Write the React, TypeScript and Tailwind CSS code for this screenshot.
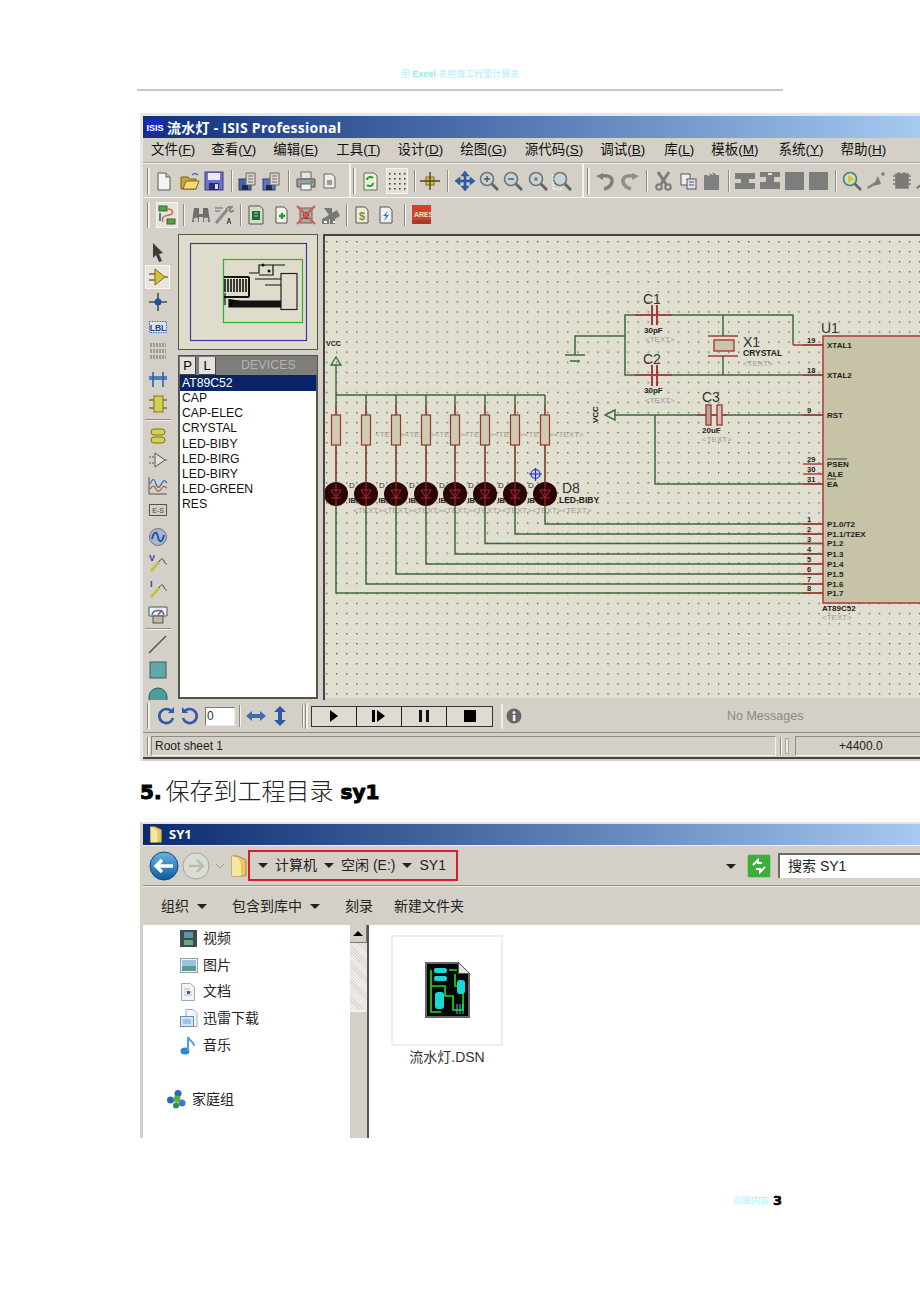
import type { ReactNode } from "react";

const CJK = "font-['Liberation_Sans','Noto_Sans_CJK_SC',sans-serif]";

type IconProps = { className?: string };

function Ic({ children, className }: { children: ReactNode; className?: string }) {
  return (
    <svg width="20" height="20" viewBox="0 0 20 20" className={`shrink-0 ${className ?? ""}`}>
      {children}
    </svg>
  );
}

function Grip({ className }: IconProps) {
  return <div className={`h-[26px] w-[3px] shrink-0 border-l border-[#8f8c84] bg-[#f2f0ea] ${className ?? ""}`} />;
}

function Sep({ className }: IconProps) {
  return <div className={`h-[22px] w-[2px] shrink-0 border-l border-[#8f8c84] bg-[#f4f2ec] ${className ?? ""}`} />;
}

function Divider({ className }: IconProps) {
  return <div className={`h-[33px] w-[2px] shrink-0 bg-[#f4f2ec] ${className ?? ""}`} />;
}

/* main toolbar */
const NewDoc = ({ className }: IconProps) => (
  <Ic className={className}>
    <path d="M4 2h8l4 4v13H4z" fill="#f4f4f4" stroke="#5a5a5a" />
    <path d="M12 2v4h4" fill="#cfcfcf" stroke="#5a5a5a" />
  </Ic>
);
const Open = ({ className }: IconProps) => (
  <Ic className={className}>
    <path d="M1 6h7l2 2h6v10H1z" fill="#c9a63c" stroke="#7d6420" />
    <path d="M3 18l3-8h13l-3 8z" fill="#f3dc78" stroke="#7d6420" />
    <path d="M12 4c2-2 4-2 6 0" fill="none" stroke="#4a6ab0" strokeWidth="1.5" />
  </Ic>
);
const Floppy = ({ className }: IconProps) => (
  <Ic className={className}>
    <rect x="1" y="1" width="18" height="18" fill="#6f70c8" stroke="#3d3d80" />
    <rect x="4" y="2" width="12" height="7" fill="#ecebf5" />
    <rect x="5" y="12" width="10" height="7" fill="#2c2c6a" />
    <rect x="11" y="13" width="3" height="5" fill="#d8d8ea" />
  </Ic>
);
const FloppyDoc = ({ className, tint = "#4b62a8" }: IconProps & { tint?: string }) => (
  <Ic className={className}>
    <rect x="1" y="8" width="12" height="11" fill={tint} stroke="#2f3c70" />
    <rect x="4" y="14" width="6" height="5" fill="#1e2750" />
    <path d="M8 2h9v12H8z" fill="#d8d6d0" stroke="#666" />
    <path d="M10 5h5M10 8h5M10 11h5" stroke="#7c6a50" />
  </Ic>
);
const Printer = ({ className }: IconProps) => (
  <Ic className={className}>
    <rect x="5" y="1" width="10" height="7" fill="#e6e6e6" stroke="#666" />
    <path d="M1 8h18v8H1z" fill="#98a0a4" stroke="#555" />
    <rect x="5" y="13" width="10" height="6" fill="#f2f2f2" stroke="#666" />
    <circle cx="16" cy="11" r="1" fill="#2e8b3e" />
  </Ic>
);
const SmallDoc = ({ className }: IconProps) => (
  <Ic className={className}>
    <path d="M5 3h8l3 3v11H5z" fill="#ecebe6" stroke="#666" />
    <rect x="8" y="9" width="5" height="5" fill="#9a9a9a" />
  </Ic>
);
const RefreshDoc = ({ className }: IconProps) => (
  <Ic className={className}>
    <path d="M4 2h10l3 3v14H4z" fill="#eef2d8" stroke="#666" />
    <path d="M7 9c0-3 4-4 6-2M13 12c0 3-4 4-6 2" fill="none" stroke="#2f9a3a" strokeWidth="2" />
  </Ic>
);
const GridBtn = ({ className }: IconProps) => (
  <div className={`flex h-[26px] w-[22px] shrink-0 items-center justify-center border border-[#f6f5f1] bg-[#e4e1da] ${className ?? ""}`}>
    <Ic>
      {[3, 8, 13, 18].flatMap((x) =>
        [3, 8, 13, 18].map((y) => <rect key={`${x}-${y}`} x={x - 1} y={y - 1} width="1.6" height="1.6" fill="#444" />),
      )}
    </Ic>
  </div>
);
const Origin = ({ className }: IconProps) => (
  <Ic className={className}>
    <rect x="6" y="6" width="8" height="8" fill="#d6c23a" stroke="#7d6c20" />
    <path d="M0 10h20M10 1v18" stroke="#5a4020" strokeWidth="1.4" />
  </Ic>
);
const Pan = ({ className }: IconProps) => (
  <Ic className={className}>
    <path d="M10 0l4 5h-3v4h4V6l5 4-5 4v-3h-4v4h3l-4 5-4-5h3v-4H5v3l-5-4 5-4v3h4V5H6z" fill="#2a62b8" stroke="#163a78" strokeWidth="0.5" />
  </Ic>
);
const Zoom = ({ className, mark }: IconProps & { mark?: ReactNode }) => (
  <Ic className={className}>
    <path d="M12 12l7 7" stroke="#666" strokeWidth="3" />
    <circle cx="8" cy="8" r="6.5" fill="#c9d2d6" stroke="#6c767a" strokeWidth="1.6" />
    {mark}
  </Ic>
);
const Undo = ({ className }: IconProps) => (
  <Ic className={className}>
    <path d="M1 5l7-3v7z" fill="#7f7f7f" />
    <path d="M7 5c6-1 11 1 10 6-1 4-4 6-8 7" fill="none" stroke="#7f7f7f" strokeWidth="3.4" />
  </Ic>
);
const Redo = ({ className }: IconProps) => (
  <Ic className={className}>
    <path d="M19 5l-7-3v7z" fill="#8e8e8e" />
    <path d="M13 5C7 4 2 6 3 11c1 4 4 6 8 7" fill="none" stroke="#8e8e8e" strokeWidth="3.4" />
  </Ic>
);
const Cut = ({ className }: IconProps) => (
  <Ic className={className}>
    <path d="M4 1l8 12M15 1L7 13" stroke="#7c7c7c" strokeWidth="3" />
    <circle cx="5" cy="16" r="2.8" fill="none" stroke="#7c7c7c" strokeWidth="2" />
    <circle cx="14" cy="16" r="2.8" fill="none" stroke="#7c7c7c" strokeWidth="2" />
  </Ic>
);
const Copy = ({ className }: IconProps) => (
  <Ic className={className}>
    <rect x="2" y="3" width="9" height="11" fill="#eee" stroke="#555" />
    <rect x="8" y="8" width="9" height="10" fill="#dfe4ee" stroke="#555" />
    <path d="M10 11h5M10 14h5" stroke="#555" />
  </Ic>
);
const Paste = ({ className }: IconProps) => (
  <Ic className={className}>
    <path d="M2 4h5V2h5l2 2h3v15H2z" fill="#7f7f7f" />
    <path d="M6 5l3-3 2 2" fill="none" stroke="#e8e6df" />
  </Ic>
);
const BlockI = ({ className }: IconProps) => (
  <Ic className={className}>
    <path d="M0 2h20v6h-6v4h6v6H0v-6h6V8H0z" fill="#7d7d7d" />
  </Ic>
);
const BlockT = ({ className }: IconProps) => (
  <Ic className={className}>
    <path d="M0 1h20v5h-6v5h6v7H0v-7h6V6H0z" fill="#7d7d7d" />
    <path d="M8 2h4v2H8z" fill="#e8e6df" />
  </Ic>
);
const BlockS = ({ className }: IconProps) => (
  <Ic className={className}>
    <rect x="0" y="1" width="19" height="18" fill="#7d7d7d" />
  </Ic>
);
const Search = ({ className }: IconProps) => (
  <Ic className={className}>
    <path d="M12 12l7 7" stroke="#666" strokeWidth="2.6" />
    <circle cx="8" cy="8" r="6.5" fill="#cfe0a8" stroke="#4a7a90" strokeWidth="1.6" />
    <path d="M6 4l6 4-6 4z" fill="#d8c23a" />
  </Ic>
);
const ProbeGray = ({ className }: IconProps) => (
  <Ic className={className}>
    <path d="M1 16l8-5 3-6 3 8-8 2-5 3z" fill="#808080" />
    <path d="M15 3h4M17 1v4" stroke="#808080" strokeWidth="1.5" />
  </Ic>
);
const ChipGray = ({ className }: IconProps) => (
  <Ic className={className}>
    <path d="M4 3h12v14H4zM1 5h3M1 9h3M1 13h3M16 5h3M16 9h3M16 13h3M7 1v2M12 1v2" fill="#7a7a7a" stroke="#7a7a7a" strokeWidth="1.5" />
  </Ic>
);
const Explorer = ({ className }: IconProps) => (
  <div className={`flex h-[26px] w-[22px] shrink-0 items-center justify-center border border-[#f6f5f1] bg-[#e6e3dc] ${className ?? ""}`}>
    <Ic>
      <rect x="2" y="1" width="8" height="5" fill="#5aa04a" stroke="#2f6a2a" />
      <rect x="10" y="14" width="8" height="5" fill="#5aa04a" stroke="#2f6a2a" />
      <path d="M10 4c7 0 7 5 2 6s-8 2-6 7" fill="none" stroke="#c87048" strokeWidth="1.5" />
      <path d="M3 8v8" stroke="#3e6fb0" strokeWidth="1.8" />
    </Ic>
  </div>
);
const Binoculars = ({ className }: IconProps) => (
  <Ic className={className}>
    <path d="M3 3h5v6h4V3h5l2 14h-7v-5H8v5H1z" fill="#6e6e6e" />
    <circle cx="5" cy="15" r="2.4" fill="#c8c8c8" />
    <circle cx="15" cy="15" r="2.4" fill="#c8c8c8" />
  </Ic>
);
const Wrench = ({ className }: IconProps) => (
  <Ic className={className}>
    <path d="M2 18L13 5" stroke="#8a8a8a" strokeWidth="3" />
    <path d="M12 6c0-3 3-5 6-4l-3 3 2 2 3-2" fill="none" stroke="#777" strokeWidth="1.5" />
    <path d="M1 3h8M1 6h5" stroke="#888" strokeWidth="1.4" />
    <path d="M13 19l2-6 2 6M14 17h2" fill="none" stroke="#444" />
  </Ic>
);
const SheetDoc = ({ className }: IconProps) => (
  <Ic className={className}>
    <path d="M3 1h11l3 3v15H3z" fill="#d7dcc4" stroke="#555" />
    <rect x="6" y="6" width="8" height="9" fill="#1e6a3a" />
    <path d="M8 8h4M8 11h4" stroke="#9fe3b0" />
  </Ic>
);
const PlusDoc = ({ className }: IconProps) => (
  <Ic className={className}>
    <path d="M5 2h8l3 3v13H5z" fill="#f2f1ea" stroke="#555" />
    <path d="M8 11h6M11 8v6" stroke="#2f9a3a" strokeWidth="2.4" />
  </Ic>
);
const RemoveSheet = ({ className }: IconProps) => (
  <Ic className={className}>
    <path d="M4 3h12v15H4z" fill="#a8a8a0" stroke="#666" />
    <rect x="7" y="7" width="6" height="7" fill="#555" />
    <path d="M1 1l18 18M19 1L1 19" stroke="#d85a50" strokeWidth="2.2" />
  </Ic>
);
const GrayNodes = ({ className }: IconProps) => (
  <Ic className={className}>
    <path d="M3 3h8v5l5-3 3 6-5 3v5h-5v-5H8v5H1v-5l7-4z" fill="#787878" />
    <path d="M3 17h3M12 17h2" stroke="#fff" strokeWidth="2" />
  </Ic>
);
const DollarDoc = ({ className }: IconProps) => (
  <Ic className={className}>
    <path d="M4 2h9l3 3v13H4z" fill="#ececd8" stroke="#555" />
    <text x="10" y="15" textAnchor="middle" fontSize="11" fontWeight="700" fill="#8a8a30" fontFamily="Liberation Sans">
      $
    </text>
  </Ic>
);
const BoltDoc = ({ className }: IconProps) => (
  <Ic className={className}>
    <path d="M4 2h9l3 3v13H4z" fill="#eef0f4" stroke="#555" />
    <path d="M12 6l-5 5h3l-2 5 5-6h-3z" fill="#2a7ac8" />
  </Ic>
);
const Ares = ({ className }: IconProps) => (
  <Ic className={className}>
    <rect x="0" y="0" width="19" height="19" fill="#d0432a" />
    <rect x="0" y="15" width="19" height="4" fill="#a83a26" />
    <text x="2" y="12" fontSize="7" fontWeight="700" fill="#f6e0c8" fontFamily="Liberation Sans">
      ARES
    </text>
  </Ic>
);

function MenuItem({ label, k }: { label: string; k: string }) {
  return (
    <span className="whitespace-nowrap">
      {label}(<span className="underline">{k}</span>)
    </span>
  );
}

const menus: [string, string, string][] = [
  ["文件", "F", "ml-[8px]"],
  ["查看", "V", "ml-[16px]"],
  ["编辑", "E", "ml-[17px]"],
  ["工具", "T", "ml-[18px]"],
  ["设计", "D", "ml-[17px]"],
  ["绘图", "G", "ml-[17px]"],
  ["源代码", "S", "ml-[18px]"],
  ["调试", "B", "ml-[17px]"],
  ["库", "L", "ml-[19px]"],
  ["模板", "M", "ml-[17px]"],
  ["系统", "Y", "ml-[20px]"],
  ["帮助", "H", "ml-[17px]"],
];

function IsisToolbars() {
  return (
    <>
      <div className="flex h-[35px] items-center border-y border-y-[#f4f2ec]">
        <Grip className="ml-[4px]" />
        <NewDoc className="ml-[4px]" />
        <Open className="ml-[6px]" />
        <Floppy className="ml-[4px]" />
        <Sep className="ml-[7px]" />
        <FloppyDoc className="ml-[5px]" />
        <FloppyDoc className="ml-[4px]" tint="#5d78b8" />
        <Sep className="ml-[6px]" />
        <Printer className="ml-[6px]" />
        <SmallDoc className="ml-[3px]" />
        <Divider className="ml-[10px]" />
        <Grip className="ml-[2px]" />
        <RefreshDoc className="ml-[4px]" />
        <GridBtn className="ml-[6px]" />
        <Sep className="ml-[6px]" />
        <Origin className="ml-[4px]" />
        <Sep className="ml-[7px]" />
        <Pan className="ml-[6px]" />
        <Zoom className="ml-[4px]" mark={<path d="M5 8h6M8 5v6" stroke="#4a5a60" strokeWidth="1.4" />} />
        <Zoom className="ml-[4px]" mark={<path d="M5 8h6" stroke="#4a5a60" strokeWidth="1.4" />} />
        <Zoom className="ml-[5px]" mark={<circle cx="8" cy="8" r="2" fill="#7a8a90" />} />
        <Zoom className="ml-[4px]" mark={<path d="M1 4v14h9" fill="none" stroke="#fff" strokeDasharray="2 1" />} />
        <Divider className="ml-[10px]" />
        <Grip className="ml-[3px]" />
        <Undo className="ml-[5px]" />
        <Redo className="ml-[5px]" />
        <Sep className="ml-[6px]" />
        <Cut className="ml-[6px]" />
        <Copy className="ml-[5px]" />
        <Paste className="ml-[3px]" />
        <Sep className="ml-[6px]" />
        <BlockI className="ml-[5px]" />
        <BlockT className="ml-[5px]" />
        <BlockS className="ml-[5px]" />
        <BlockS className="ml-[4px]" />
        <Sep className="ml-[6px]" />
        <Search className="ml-[5px]" />
        <ProbeGray className="ml-[4px]" />
        <ChipGray className="ml-[6px]" />
        <ProbeGray className="ml-[3px]" />
      </div>
      <div className="flex h-[34px] items-center">
        <Grip className="ml-[4px]" />
        <Explorer className="ml-[6px]" />
        <Sep className="ml-[5px]" />
        <Binoculars className="ml-[6px]" />
        <Wrench className="ml-[3px]" />
        <Sep className="ml-[6px]" />
        <SheetDoc className="ml-[4px]" />
        <PlusDoc className="ml-[5px]" />
        <RemoveSheet className="ml-[5px]" />
        <GrayNodes className="ml-[5px]" />
        <Sep className="ml-[5px]" />
        <DollarDoc className="ml-[4px]" />
        <BoltDoc className="ml-[4px]" />
        <Sep className="ml-[8px]" />
        <Ares className="ml-[6px]" />
      </div>
    </>
  );
}

function ToolColumn() {
  const sep = "w-[26px] h-[2px] border-t border-[#8f8c84] bg-[#f4f2ec] shrink-0";
  return (
    <div className="flex h-[468px] w-[35px] shrink-0 flex-col items-center overflow-hidden pr-[6px]">
      <Ic className="mt-[10px]">
        <path d="M5 1l10 10-4 1 3 7-3 1-3-7-3 3z" fill="#3c3c3c" />
      </Ic>
      <div className="mt-[3px] flex h-[24px] w-[25px] shrink-0 items-center justify-center border border-[#f6f5f1] bg-[#e8e5de]">
        <Ic>
          <path d="M7 2l10 8-10 8z" fill="#d8c23a" stroke="#7d6c20" />
          <path d="M1 7h6M1 13h6M17 10h3" stroke="#7d6c20" strokeWidth="1.4" />
        </Ic>
      </div>
      <Ic className="mt-[3px]">
        <path d="M1 10h18M10 1v18" stroke="#3d5a30" strokeWidth="1.6" />
        <circle cx="10" cy="10" r="3.5" fill="#1d4fa8" />
      </Ic>
      <Ic className="mt-[5px]">
        <rect x="1.5" y="4.5" width="17" height="11" fill="#dfe4ee" stroke="#4a6ab0" strokeDasharray="1.5 1" />
        <text x="10" y="13.5" textAnchor="middle" fontSize="8.5" fill="#20408a" fontFamily="Liberation Sans" fontWeight="700">
          LBL
        </text>
      </Ic>
      <Ic className="mt-[4px]">
        <path d="M2 3h16M2 5h16M2 9h16M2 11h16M2 15h16M2 17h16" stroke="#66665e" strokeDasharray="2 1" />
      </Ic>
      <Ic className="mt-[8px]">
        <path d="M1 8h18M1 10h18" stroke="#2a62b8" strokeWidth="1.4" />
        <path d="M5 3v15M15 3v15" stroke="#2a62b8" strokeWidth="1.6" />
      </Ic>
      <Ic className="mt-[5px]">
        <rect x="6" y="2" width="9" height="16" fill="#d8cf50" stroke="#7d7420" />
        <path d="M1 6h5M1 14h5M15 6h4M15 14h4" stroke="#7d7420" strokeWidth="1.4" />
      </Ic>
      <div className={`${sep} mt-[5px]`} />
      <Ic className="mt-[5px]">
        <rect x="3" y="3" width="14" height="6" rx="3" fill="#d8cf50" stroke="#7d7420" />
        <rect x="3" y="11" width="14" height="6" rx="3" fill="#d8cf50" stroke="#7d7420" />
      </Ic>
      <Ic className="mt-[4px]">
        <path d="M7 3l10 7-10 7z" fill="#e4e1da" stroke="#555" />
        <path d="M1 7h6M1 13h6M17 10h3" stroke="#555" strokeDasharray="2 1" />
      </Ic>
      <Ic className="mt-[6px]">
        <path d="M1 1v17h18" fill="none" stroke="#555" />
        <path d="M2 8c3-6 4-6 6 0s4 3 6-1 3-2 5 0" fill="none" stroke="#2a62b8" strokeWidth="1.2" />
        <path d="M2 13c3-4 4-4 6 0s4 2 6-1 3-1 5 0" fill="none" stroke="#c8502a" strokeWidth="1.2" />
      </Ic>
      <Ic className="mt-[4px]">
        <rect x="1.5" y="4.5" width="17" height="11" fill="#d4d0c8" stroke="#555" />
        <text x="10" y="13" textAnchor="middle" fontSize="7" fill="#444" fontFamily="Liberation Sans">
          E-S
        </text>
      </Ic>
      <Ic className="mt-[7px]">
        <circle cx="10" cy="10" r="8.5" fill="#a8b6cc" stroke="#6c7686" />
        <path d="M4 12c2-8 5-8 6-2s4 6 6-2" fill="none" stroke="#1d4fa8" strokeWidth="1.8" />
      </Ic>
      <Ic className="mt-[6px]">
        <text x="1" y="8" fontSize="9" fontWeight="700" fill="#2a4aa0" fontFamily="Liberation Sans">
          V
        </text>
        <path d="M3 18l8-9" stroke="#c8c040" strokeWidth="3" />
        <path d="M11 9c2-4 4-4 5-1s2 3 3 3" fill="none" stroke="#444" />
      </Ic>
      <Ic className="mt-[6px]">
        <text x="2" y="8" fontSize="9" fontWeight="700" fill="#2a4aa0" fontFamily="Liberation Sans">
          I
        </text>
        <path d="M3 18l8-9" stroke="#c8c040" strokeWidth="3" />
        <path d="M11 9c2-4 4-4 5-1s2 3 3 3" fill="none" stroke="#444" />
      </Ic>
      <Ic className="mt-[6px]">
        <path d="M1 2h18v9H1z" fill="#e8f0f4" stroke="#555" />
        <path d="M4 10c1-6 11-6 12 0" fill="none" stroke="#4a6ab0" strokeWidth="1.4" />
        <path d="M10 10l4-5" stroke="#c8402a" strokeWidth="1.4" />
        <rect x="5" y="11" width="10" height="7" fill="#bcb8a4" stroke="#555" />
      </Ic>
      <div className={`${sep} mt-[3px]`} />
      <Ic className="mt-[4px]">
        <path d="M1 19L18 2" stroke="#4a4a4a" strokeWidth="1.3" />
      </Ic>
      <Ic className="mt-[6px]">
        <rect x="2" y="2" width="16" height="16" fill="#62a8a8" stroke="#3c5a64" />
      </Ic>
      <Ic className="mt-[2px]">
        <path d="M1 20v-5a9 9 0 0 1 18 0v5z" fill="#4c9c98" stroke="#2f5a60" />
      </Ic>
    </div>
  );
}

function SidePanel() {
  const devices = ["CAP", "CAP-ELEC", "CRYSTAL", "LED-BIBY", "LED-BIRG", "LED-BIRY", "LED-GREEN", "RES"];
  return (
    <div className="mt-[2px] flex h-[465px] w-[140px] shrink-0 flex-col">
      <div className="h-[116px] border border-[#55544c] bg-[#dfdccb]">
        <svg width="138" height="114" viewBox="0 0 138 114">
          <rect x="11.5" y="8.5" width="116" height="97" fill="none" stroke="#3c3ca0" strokeWidth="1.2" />
          <rect x="44.5" y="24.5" width="79" height="63" fill="none" stroke="#28b428" strokeWidth="1.2" />
          <rect x="102" y="38.5" width="16" height="36" fill="none" stroke="#222" strokeWidth="1.2" />
          <path d="M45 42h25M45 62h25M70 42v20" stroke="#111" strokeWidth="2" />
          <path d="M46 44v13M49 44v13M52 44v13M55 44v13M58 44v13M61 44v13M64 44v13M67 44v13" stroke="#111" strokeWidth="1.6" />
          <path d="M46 58v12M50 64v8h52M55 66h47" stroke="#111" strokeWidth="1.2" />
          <rect x="53" y="66" width="49" height="6" fill="#111" />
          <path d="M70 38h10v-8h26M80 30h14v10H80M76 44h26M86 50h16" fill="none" stroke="#111" strokeWidth="1.2" />
          <circle cx="84" cy="30" r="1.5" fill="#111" />
          <circle cx="90" cy="36" r="1.5" fill="#111" />
        </svg>
      </div>
      <div className="mt-[5px] flex h-[20px] items-center border-x border-t border-[#55544c] bg-[#7d7d7b]">
        <div className="ml-[1px] flex h-[18px] w-[16px] items-center justify-center border-r border-b border-[#444] bg-[#e4e1da] text-[13px] leading-none text-black">
          P
        </div>
        <div className="ml-[3px] flex h-[18px] w-[17px] items-center justify-center border-r border-b border-[#444] bg-[#e4e1da] text-[13px] leading-none text-black">
          L
        </div>
        <span className="ml-[25px] text-[12.5px] text-[#b4b4b0]">DEVICES</span>
      </div>
      <div className="flex-1 border-x-2 border-b-2 border-x-[#55544c] border-b-[#55544c] bg-white text-[12.2px] leading-[15.2px] text-[#111]">
        <div className="h-[16px] bg-[#0a246a] pl-[2px] leading-[16px] text-white">AT89C52</div>
        {devices.map((d) => (
          <div key={d} className="pl-[2px]">
            {d}
          </div>
        ))}
      </div>
    </div>
  );
}

const ledXs = [336, 366, 396, 426, 455, 485, 515, 545];
const ledBusYs = [593, 584, 574, 564, 554, 543.5, 534, 524];
const wire = "#3f6a3c";
const red = "#a8383a";
const chipPins: [string, string, number][] = [
  ["19", "XTAL1", 345],
  ["18", "XTAL2", 375],
  ["9", "RST", 415],
  ["29", "PSEN", 464],
  ["30", "ALE", 474],
  ["31", "EA", 484],
  ["1", "P1.0/T2", 524],
  ["2", "P1.1/T2EX", 534],
  ["3", "P1.2", 543.5],
  ["4", "P1.3", 554],
  ["5", "P1.4", 564],
  ["6", "P1.5", 574],
  ["7", "P1.6", 584],
  ["8", "P1.7", 593],
];

function SmallText({ x, y, children, fill = "#222", bold, size = 8 }: { x: number; y: number; children: ReactNode; fill?: string; bold?: boolean; size?: number }) {
  return (
    <text x={x} y={y} fontSize={size} fill={fill} fontWeight={bold ? 700 : 400} fontFamily="Liberation Sans">
      {children}
    </text>
  );
}

function Schematic() {
  const gray = "#9c9c90";
  return (
    <svg width="595" height="462" viewBox="325 236 595 462" className="block">
      <defs>
        <pattern id="dots" x="326" y="241" width="10.05" height="10.05" patternUnits="userSpaceOnUse">
          <rect x="0" y="0" width="1.3" height="1.3" fill="#55554a" />
        </pattern>
      </defs>
      <rect x="325" y="236" width="595" height="462" fill="#e1dfcf" />
      <rect x="325" y="236" width="595" height="462" fill="url(#dots)" />

      {/* crystal section */}
      <path d="M793 345v-30H625v60h198M625 336h-50v19M565 355h20M570 361h10M723 315v21M723 356v19" fill="none" stroke={wire} strokeWidth="1.5" />
      <path d="M793 345h30M635 315h37M635 375h37" stroke={red} strokeWidth="1.4" />
      <path d="M652 305v20M657 305v20M652 365v21M657 365v21" stroke={red} strokeWidth="2" />
      <path d="M708 336h30M708 356h30" stroke={red} strokeWidth="1.4" />
      <rect x="714" y="340" width="20" height="11" fill="#c9c5a8" stroke={red} strokeWidth="1.4" />
      <SmallText x={643} y={304} size={14} fill="#333">C1</SmallText>
      <SmallText x={644} y={333} bold>30pF</SmallText>
      <SmallText x={645} y={342} fill={gray}>&lt;TEXT&gt;</SmallText>
      <SmallText x={643} y={364} size={14} fill="#333">C2</SmallText>
      <SmallText x={644} y={393} bold>30pF</SmallText>
      <SmallText x={645} y={403} fill={gray}>&lt;TEXT&gt;</SmallText>
      <SmallText x={743} y={347} size={14} fill="#333">X1</SmallText>
      <SmallText x={743} y={356} size={8.5} bold>CRYSTAL</SmallText>
      <SmallText x={743} y={366} fill={gray}>&lt;TEXT&gt;</SmallText>

      {/* reset */}
      <path d="M614 415h209M655 415v69h168" fill="none" stroke={wire} strokeWidth="1.5" />
      <path d="M697 415h30" stroke={red} strokeWidth="1.4" />
      <rect x="706" y="405" width="5" height="20" fill="#b8a898" stroke={red} strokeWidth="1.4" />
      <rect x="717" y="405" width="5" height="20" fill="#c9c5a8" stroke={red} strokeWidth="1.4" />
      <path d="M615 410l-10 5 10 5z" fill="none" stroke={wire} strokeWidth="1.4" />
      <text x="598" y="423" fontSize="8" fontWeight="700" fill="#222" fontFamily="Liberation Sans" transform="rotate(-90 598 423)">
        VCC
      </text>
      <SmallText x={702} y={402} size={14} fill="#333">C3</SmallText>
      <SmallText x={702} y={433} bold>20uF</SmallText>
      <SmallText x={702} y={442} fill={gray}>&lt;TEXT&gt;</SmallText>

      {/* LED bus */}
      <path d="M336 395h209" fill="none" stroke={wire} strokeWidth="1.5" />
      <path d="M331 365l5-8 5 8zM336 365v30" fill="none" stroke={wire} strokeWidth="1.4" />
      <SmallText x={326} y={346} size={7} bold>VCC</SmallText>
      <SmallText x={375} y={437} fill={gray}>{"<TEXT><TEXT><TEXT><TEXT><TEXT><TEXT><TEXT>"}</SmallText>
      <SmallText x={353} y={513} fill={gray}>{"<TEXT><TEXT><TEXT><TEXT><TEXT><TEXT><TEXT><TEXT>"}</SmallText>
      {ledXs.map((x, i) => (
        <g key={x}>
          <path d={`M${x} 395v20M${x} 445v37M${x} 506v${ledBusYs[i] - 506}H823`} fill="none" stroke={wire} strokeWidth="1.5" />
          <path d={`M${x} 405v10M${x} 445v37`} stroke={red} strokeWidth="1.1" />
          <rect x={x - 4.5} y="415" width="9" height="30" fill="#cfcab0" stroke="#8f3a30" strokeWidth="1.2" />
          {i < 7 && (
            <>
              <text x={x + 13} y="488" fontSize="8" fill="#333" fontFamily="Liberation Sans">
                D
              </text>
              <text x={x + 12.5} y="503" fontSize="7.5" fontWeight="700" fill="#222" fontFamily="Liberation Sans">
                IB
              </text>
            </>
          )}
          <circle cx={x} cy="494" r="12" fill="#2a0508" />
          <path d={`M${x - 5} 490h10l-5 8zM${x - 5} 498h10M${x} 482v24`} fill="none" stroke="#a8282c" strokeWidth="1" />
        </g>
      ))}
      <SmallText x={562} y={493} size={14} fill="#333">D8</SmallText>
      <SmallText x={559} y={503} size={8.5} bold>LED-BIBY</SmallText>
      <circle cx="535.5" cy="474" r="4.5" fill="#c8c8e8" stroke="#2a2ac8" strokeWidth="1.2" />
      <path d="M529 474h13M535.5 468v13" stroke="#2a2ac8" strokeWidth="1.2" />

      {/* chip */}
      <rect x="823" y="336" width="110" height="267" fill="#c6c3a6" stroke={red} strokeWidth="1.5" />
      <SmallText x={821} y={333} size={14} fill="#333">U1</SmallText>
      {chipPins.map(([num, name, y]) => (
        <g key={num}>
          <path d={`M803 ${y}h20`} stroke={red} strokeWidth="1.4" />
          <SmallText x={807} y={y - 2} bold size={7.5}>{num}</SmallText>
          <SmallText x={827} y={y + 2.5} bold size={8}>{name}</SmallText>
        </g>
      ))}
      <path d="M827 459h20M827 479h9" stroke="#222" strokeWidth="0.8" />
      <SmallText x={822} y={611} bold>AT89C52</SmallText>
      <SmallText x={822} y={620} fill={gray}>&lt;TEXT&gt;</SmallText>
    </svg>
  );
}

function BottomBar() {
  const btn = "flex h-[19px] w-[45px] items-center justify-center border-r border-[#222] bg-[#dedbd3]";
  return (
    <div className="flex h-[33px] items-center border-b border-b-[#8f8c84]">
      <Grip className="ml-[4px]" />
      <svg width="18" height="20" viewBox="0 0 18 20" className="ml-[7px] shrink-0">
        <path d="M15 6A7 7 0 1 0 16 12" fill="none" stroke="#2f5aa8" strokeWidth="2.6" />
        <path d="M11 7h6V1z" fill="#2f5aa8" />
      </svg>
      <svg width="18" height="20" viewBox="0 0 18 20" className="ml-[6px] shrink-0">
        <path d="M3 6a7 7 0 1 1-1 6" fill="none" stroke="#2f5aa8" strokeWidth="2.6" />
        <path d="M7 7H1V1z" fill="#2f5aa8" />
      </svg>
      <div className="ml-[6px] h-[19px] w-[30px] border border-t-[#777] border-l-[#777] border-r-[#eee] border-b-[#eee] bg-white pl-[1px] text-[12px] leading-[16px] text-[#333]">
        0
      </div>
      <Sep className="ml-[4px]" />
      <svg width="20" height="20" viewBox="0 0 20 20" className="ml-[5px] shrink-0">
        <path d="M0 10l6-5v3h8V5l6 5-6 5v-3H6v3z" fill="#3f6cb0" />
      </svg>
      <svg width="14" height="20" viewBox="0 0 14 20" className="ml-[7px] shrink-0">
        <path d="M7 0l6 6H9v8h4l-6 6-6-6h4V6H1z" fill="#2c5aa0" />
      </svg>
      <Sep className="ml-[15px]" />
      <Grip className="ml-[1px]" />
      <div className="ml-[3px] flex border border-[#333]">
        <div className={btn}>
          <svg width="10" height="12" viewBox="0 0 10 12"><path d="M1 0l8 6-8 6z" fill="#000" /></svg>
        </div>
        <div className={btn}>
          <svg width="14" height="12" viewBox="0 0 14 12"><path d="M0 0h3v12H0zM5 0l8 6-8 6z" fill="#000" /></svg>
        </div>
        <div className={btn}>
          <svg width="10" height="12" viewBox="0 0 10 12"><path d="M0 0h3v12H0zM7 0h3v12H7z" fill="#111" /></svg>
        </div>
        <div className={`${btn} border-r-0`}>
          <svg width="12" height="12" viewBox="0 0 12 12"><rect width="12" height="12" fill="#000" /></svg>
        </div>
      </div>
      <div className="ml-[8px] flex h-[25px] items-center border-l-2 border-[#eeece6] pl-[3px]">
        <svg width="16" height="16" viewBox="0 0 16 16">
          <circle cx="8" cy="8" r="7.5" fill="#666" />
          <rect x="6.8" y="7" width="2.6" height="6" fill="#eee" />
          <circle cx="8" cy="4.5" r="1.5" fill="#eee" />
        </svg>
      </div>
      <span className="ml-[205px] text-[12.5px] text-[#8a8a84]">No Messages</span>
    </div>
  );
}

function StatusBar() {
  return (
    <div className="flex h-[26px] items-center border-b-2 border-b-[#45443f] pt-[2px] text-[12px] text-[#222]">
      <Grip className="ml-[4px] !h-[18px]" />
      <div className="ml-[1px] flex h-[20px] w-[625px] shrink-0 items-center border border-t-[#8f8c84] border-l-[#8f8c84] border-r-[#f4f2ec] border-b-[#f4f2ec] pl-[3px]">
        Root sheet 1
      </div>
      <Sep className="ml-[4px] !h-[18px]" />
      <div className="ml-[3px] h-[16px] w-[4px] shrink-0 border border-[#a8a59c] bg-[#eeece6]" />
      <div className="ml-[6px] flex h-[20px] w-[125px] shrink-0 items-center border border-t-[#8f8c84] border-l-[#8f8c84] border-b-[#f4f2ec] border-r-0 pl-[43px]">
        +4400.0
      </div>
    </div>
  );
}

function IsisWindow() {
  return (
    <div className="h-[648px] w-[780px] overflow-hidden border-t-[3px] border-l-[3px] border-t-[#e8e6df] border-l-[#e8e6df] bg-[#d4d0c8]">
      <div className="flex h-[22px] items-center bg-gradient-to-r from-[#12307c] to-[#a6caf0] text-[14px] font-bold text-white">
        <svg width="18" height="14" viewBox="0 0 18 14" className="ml-[3px] shrink-0">
          <rect width="18" height="14" fill="#1a28c8" />
          <text x="9" y="10.5" textAnchor="middle" fontSize="9" fill="#fff" fontFamily="Liberation Sans">
            ISIS
          </text>
        </svg>
        <span className="ml-[3px] font-['Open_Sans','Noto_Sans_CJK_SC',sans-serif] tracking-[0.25px]">流水灯 - ISIS Professional</span>
      </div>
      <div className="flex h-[25px] items-center border-b border-b-[#a8a59c] text-[13.5px] text-[#111]">
        {menus.map(([label, k, ml]) => (
          <span key={k} className={ml}>
            <MenuItem label={label} k={k} />
          </span>
        ))}
      </div>
      <IsisToolbars />
      <div className="flex h-[468px]">
        <ToolColumn />
        <SidePanel />
        <div className="ml-[5px] mt-[2px] h-[466px] shrink-0 border-t-2 border-l-2 border-t-[#45443f] border-l-[#45443f]">
          <Schematic />
        </div>
      </div>
      <BottomBar />
      <StatusBar />
    </div>
  );
}

const Caret = () => <span className="mx-[1px] inline-block border-x-[5px] border-t-[5px] border-x-transparent border-t-[#222] align-middle" />;

function Folder({ className }: IconProps) {
  return (
    <svg width="16" height="22" viewBox="0 0 16 22" className={`shrink-0 ${className ?? ""}`}>
      <path d="M1 1h6l8 4v16H1z" fill="#e8c860" stroke="#a88c38" />
      <path d="M1 1c6 1 9 4 9 10v10H1z" fill="#f6e6a0" />
    </svg>
  );
}

const navItems: [string, ReactNode][] = [
  [
    "视频",
    <svg key="v" width="17" height="17" viewBox="0 0 17 17">
      <rect width="17" height="17" fill="#3c4c50" />
      <rect x="4" y="2" width="9" height="6" fill="#5a98a8" />
      <rect x="4" y="10" width="9" height="5" fill="#6aa880" />
    </svg>,
  ],
  [
    "图片",
    <svg key="p" width="18" height="15" viewBox="0 0 18 15">
      <rect x="0.5" y="0.5" width="17" height="14" fill="#eef4f8" stroke="#8aa0b0" />
      <rect x="2" y="2" width="14" height="6" fill="#9ac4dc" />
      <rect x="2" y="8" width="14" height="5" fill="#5c9a8a" />
    </svg>,
  ],
  [
    "文档",
    <svg key="d" width="16" height="18" viewBox="0 0 16 18">
      <path d="M1.5 0.5h9l4 4v13h-13z" fill="#f2f4f8" stroke="#a0a8b8" />
      <path d="M4 6h6M4 9h8M4 12h8" stroke="#b0b8c4" />
      <rect x="7" y="8" width="3" height="3" fill="#4a5a80" />
    </svg>,
  ],
  [
    "迅雷下载",
    <svg key="x" width="18" height="18" viewBox="0 0 18 18">
      <path d="M6 0.5h7l4 4v13H6z" fill="#f4f6fa" stroke="#9aa8b8" />
      <rect x="0.5" y="7.5" width="13" height="10" fill="#cfe4f4" stroke="#6a90b0" />
      <rect x="3" y="10" width="8" height="5" fill="#9cc4e4" />
    </svg>,
  ],
  [
    "音乐",
    <svg key="m" width="16" height="19" viewBox="0 0 16 19">
      <ellipse cx="5" cy="15" rx="4.5" ry="3.5" fill="#2c88d4" />
      <path d="M8 15V1c1 4 6 4 6 9" fill="none" stroke="#4aa0e0" strokeWidth="2" />
    </svg>,
  ],
];

function NavPane() {
  return (
    <div className="h-[213px] w-[207px] shrink-0 overflow-hidden bg-white text-[14px] text-[#222]">
      <div className="flex flex-col pl-[37px]">
        {navItems.map(([label, icon]) => (
          <div key={label} className="flex h-[26.7px] items-center">
            <div className="flex w-[23px] shrink-0 justify-start">{icon}</div>
            <span>{label}</span>
          </div>
        ))}
      </div>
      <div className="mt-[28px] flex h-[26px] items-center pl-[24px]">
        <svg width="19" height="19" viewBox="0 0 19 19" className="shrink-0">
          <circle cx="11" cy="3.5" r="3.5" fill="#2c68b8" />
          <circle cx="3.5" cy="10" r="3.5" fill="#2c68b8" />
          <circle cx="15" cy="13" r="3.5" fill="#3c78c8" />
          <circle cx="10" cy="9" r="3.5" fill="#5cae3c" />
          <circle cx="9" cy="15.5" r="3" fill="#3c8a3c" />
        </svg>
        <span className="ml-[6px]">家庭组</span>
      </div>
    </div>
  );
}

function FileIcon() {
  return (
    <svg width="45" height="56" viewBox="0 0 45 56" className="mx-auto mt-[25px]">
      <path d="M1 1h32l11 11v43H1z" fill="#050505" stroke="#666" strokeWidth="2" />
      <path d="M33.5 0.5v11h11z" fill="#e4e4e4" stroke="#555" />
      <path d="M6 8v42h10M6 24h14v10h8v14h10V24h-8V12M24 8h8" fill="none" stroke="#18e018" strokeWidth="1.6" />
      <rect x="9" y="6" width="13" height="5" rx="2" fill="#18d8d8" />
      <rect x="9" y="14" width="13" height="5" rx="2" fill="#18d8d8" />
      <rect x="10" y="30" width="9" height="17" rx="3" fill="#18d8d8" />
      <rect x="32" y="18" width="8" height="14" rx="3" fill="#18d8d8" />
      <path d="M32 42v10M35 42v10M38 42v10" stroke="#18d8d8" />
    </svg>
  );
}

function ExplorerWindow() {
  return (
    <div className="h-[316px] w-[780px] overflow-hidden border-t-2 border-l-[3px] border-t-[#e8e6df] border-l-[#d4d0c8] bg-[#d4d0c8]">
      <div className="flex h-[21px] items-center bg-gradient-to-r from-[#0c2a70] to-[#a6caf0] text-[13px] font-bold text-white">
        <Folder className="ml-[5px] !h-[17px]" />
        <span className="ml-[5px] font-['Open_Sans',sans-serif]">SY1</span>
      </div>
      <div className="flex h-[41px] items-center border-y border-y-[#f0eee8] border-b-[#8f8c84]">
        <svg width="80" height="32" viewBox="0 0 80 32" className="ml-[5px] shrink-0">
          <defs>
            <linearGradient id="back" x1="0" y1="0" x2="0" y2="1">
              <stop offset="0" stopColor="#6ab4e4" />
              <stop offset="1" stopColor="#0c5a9c" />
            </linearGradient>
          </defs>
          <circle cx="48" cy="16" r="13" fill="#dcdcd6" stroke="#a8a8a0" />
          <path d="M41 16h14M49 10l6 6-6 6" fill="none" stroke="#bcbcb4" strokeWidth="2.5" />
          <circle cx="16" cy="16" r="14" fill="url(#back)" stroke="#0c4a88" />
          <path d="M25 16H8M14 10l-6 6 6 6" fill="none" stroke="#fff" strokeWidth="3.4" />
          <path d="M68 14l4 4 4-4" fill="none" stroke="#999" />
        </svg>
        <Folder className="ml-[3px]" />
        <div className="ml-px flex h-[31px] w-[210px] shrink-0 items-center gap-[6px] border-2 border-[#d81e28] pl-[7px] text-[14px] text-[#222]">
          <Caret />
          <span>计算机</span>
          <Caret />
          <span>空闲 (E:)</span>
          <Caret />
          <span>SY1</span>
        </div>
        <span className="ml-[267px] shrink-0">
          <Caret />
        </span>
        <svg width="24" height="24" viewBox="0 0 24 24" className="ml-[10px] shrink-0">
          <rect x="0.5" y="0.5" width="23" height="23" rx="2" fill="#3cae3c" stroke="#a8c8a0" />
          <path d="M6 11l5-5v3h4M18 13l-5 5v-3H9" fill="none" stroke="#fff" strokeWidth="2" />
        </svg>
        <div className="ml-[7px] flex h-[25px] w-[145px] shrink-0 items-center border-t-2 border-l-2 border-t-[#6a6a66] border-l-[#6a6a66] bg-white pl-[8px] text-[14px] text-[#222]">
          搜索 SY1
        </div>
      </div>
      <div className="flex h-[39px] items-center border-t border-t-[#f0eee8] text-[14px] text-[#222]">
        <span className="ml-[18px]">组织</span>
        <span className="ml-[7px]"><Caret /></span>
        <span className="ml-[24px]">包含到库中</span>
        <span className="ml-[7px]"><Caret /></span>
        <span className="ml-[24px]">刻录</span>
        <span className="ml-[21px]">新建文件夹</span>
      </div>
      <div className="flex h-[213px]">
        <NavPane />
        <div className="flex h-[213px] w-[19px] shrink-0 flex-col border-r-2 border-r-[#55544c] bg-[#d4d0c8]">
          <div className="flex h-[18px] shrink-0 items-center justify-center border-r border-b border-[#777] bg-[#d4d0c8]">
            <span className="border-x-[5px] border-b-[5px] border-x-transparent border-b-black" />
          </div>
          <div className="h-[67px] shrink-0 bg-[repeating-linear-gradient(45deg,#f2f0ec_0px,#f2f0ec_1px,#dcd9d2_1px,#dcd9d2_2px)]" />
          <div className="flex-1 border-t-2 border-t-[#f4f2ec] bg-[#d4d0c8]" />
        </div>
        <div className="flex-1 bg-white pt-[10px] pl-[22px]">
          <div className="h-[111px] w-[112px] border-2 border-[#eeeeee] bg-white">
            <FileIcon />
          </div>
          <div className="mt-[1px] w-[112px] text-center text-[14px] leading-[20px] text-[#333]">流水灯.DSN</div>
        </div>
      </div>
    </div>
  );
}

export default function App() {
  const heavy = "font-['DejaVu_Sans',sans-serif] text-[20px] font-bold text-black [-webkit-text-stroke:1px_black]";
  return (
    <div className={`h-[1302px] w-[920px] overflow-hidden bg-white ${CJK}`}>
      <div className="pt-[68px] text-center text-[9px] leading-[12px] text-[#aef0fa]">
        用 <span className="font-bold text-[#8fe8f6]">Excel</span> 表格做工程量计算表
      </div>
      <div className="ml-[137px] mt-[9px] h-[2px] w-[646px] bg-[#c8c8c8]" />
      <div className="ml-[140px] mt-[22px]">
        <IsisWindow />
        <div className="flex h-[61px] items-center text-[24px] font-light text-[#222]">
          <span className={heavy}>5.</span>
          <span className="ml-[4px]">保存到工程目录</span>
          <span className={`ml-[7px] ${heavy}`}>sy1</span>
        </div>
        <ExplorerWindow />
      </div>
      <div className="ml-[733px] mt-[55px] flex items-center">
        <span className="text-[9px] text-[#aef0fa]">页脚内容</span>
        <span className="ml-[4px] -mt-[2px] font-['DejaVu_Sans',sans-serif] text-[13px] font-bold text-black [-webkit-text-stroke:0.6px_black]">3</span>
      </div>
    </div>
  );
}
